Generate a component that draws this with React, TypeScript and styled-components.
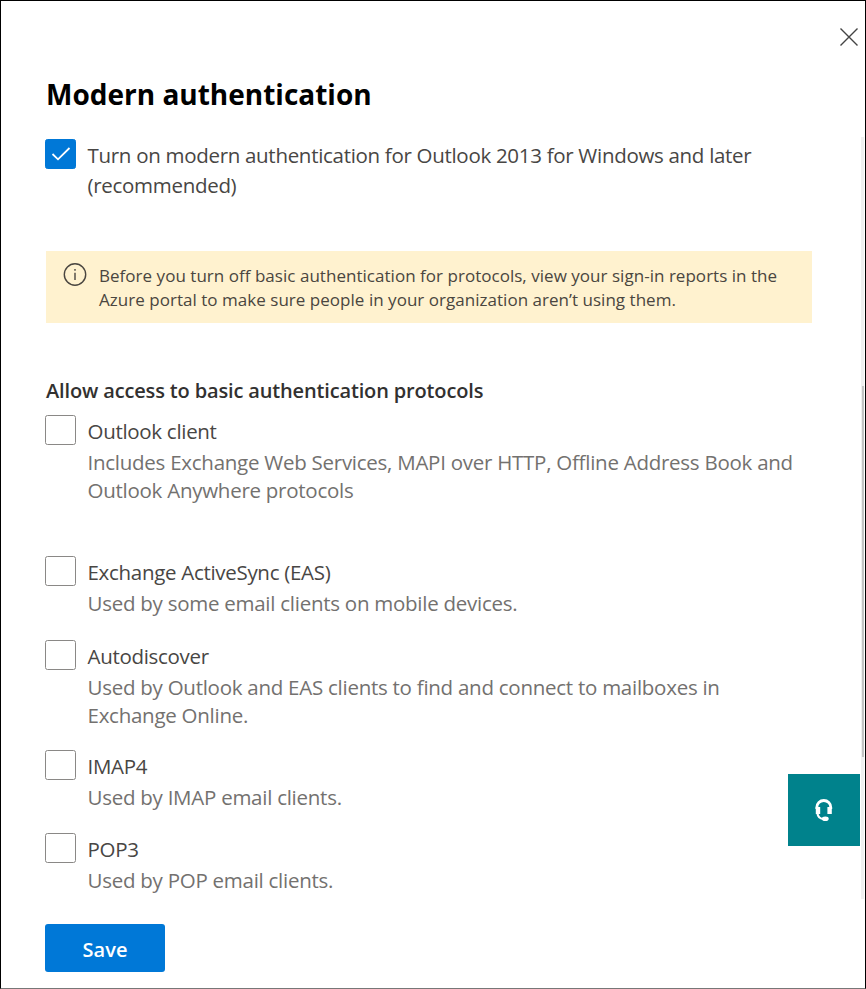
import React, { useState } from 'react';
import styled, { createGlobalStyle } from 'styled-components';

const GlobalStyle = createGlobalStyle`
  * { box-sizing: border-box; }
  body { margin: 0; background: #fff; }
  body, button {
    font-family: 'Open Sans', 'Noto Sans', sans-serif;
    font-variant-ligatures: none;
  }
`;

const Panel = styled.main`
  position: relative;
  display: flex;
  flex-direction: column;
  width: 866px;
  height: 989px;
  padding: 0 53px 0 44px;
  border: solid #000;
  border-width: 1px 1px 0 1px;
  border-bottom: 1px solid #777;
  background: #fff;
  overflow: hidden;
`;

const TopBar = styled.header`
  display: flex;
  justify-content: flex-end;
  height: 73px;
  margin-right: -47px;
  padding-top: 26px;
`;

const CloseButton = styled.button`
  display: block;
  width: 20px;
  height: 20px;
  padding: 0;
  border: 0;
  background: none;
`;

const Title = styled.h1`
  margin: 0;
  padding-left: 1px;
  height: 65px;
  font-size: 28px;
  font-weight: 700;
  line-height: 40px;
  color: #000;
`;

const Option = styled.section<{ $gap: number }>`
  display: grid;
  grid-template-columns: 30px 1fr;
  column-gap: 12.5px;
  margin-bottom: ${(p) => p.$gap}px;
`;

const CheckBox = styled.button<{ $checked: boolean }>`
  display: flex;
  align-items: center;
  justify-content: center;
  width: 31px;
  height: 30px;
  padding: 0;
  border: 1px solid ${(p) => (p.$checked ? '#0078d7' : '#8a8886')};
  border-radius: 2.5px;
  background: ${(p) => (p.$checked ? '#0078d7' : '#fff')};
`;

const OptionText = styled.div`
  padding-top: 1px;
  font-size: 20.5px;
  font-weight: 380;
  white-space: pre-line;
`;

const Label = styled.div`
  line-height: 30px;
  letter-spacing: -0.3px;
  color: #484644;
`;

const Description = styled.div`
  margin-top: 2px;
  line-height: 28px;
  letter-spacing: -0.26px;
  color: #73716f;
`;

const Notice = styled.aside`
  display: flex;
  gap: 12px;
  width: 766px;
  height: 72px;
  margin: 0 0 53px 1px;
  padding: 12px 17px;
  background: #fff2cf;
  color: #4a4640;
`;

const NoticeText = styled.p`
  margin: 0;
  padding-top: 1px;
  font-size: 17px;
  line-height: 24px;
  letter-spacing: 0.03px;
  white-space: pre-line;
`;

const SectionTitle = styled.h2`
  margin: 0;
  padding-left: 1px;
  height: 39px;
  font-size: 20px;
  font-weight: 600;
  line-height: 30px;
  letter-spacing: -0.15px;
  color: #323130;
`;

const SaveButton = styled.button`
  width: 120px;
  height: 48px;
  margin-top: 8px;
  padding: 2px 0 0;
  border: 0;
  border-radius: 3px;
  background: #0078d7;
  color: #fff;
  font-size: 20px;
  font-weight: 600;
`;

const ScrollTrack = styled.div`
  position: absolute;
  top: 136px;
  right: 1px;
  width: 3px;
  height: 762px;
  background: #f0f0f0;
`;

const ScrollThumb = styled.div`
  width: 2px;
  height: 371px;
  margin: 249px 0 0 1px;
  background: #c4c4c4;
`;

const HelpButton = styled.button`
  position: absolute;
  top: 773px;
  right: 5px;
  display: flex;
  align-items: center;
  justify-content: center;
  width: 72px;
  height: 72px;
  padding: 0;
  border: 0;
  background: #00828c;
`;

type Item = { label: string; detail?: string; gap: number };

const protocols: Item[] = [
  {
    label: 'Outlook client',
    detail:
      'Includes Exchange Web Services, MAPI over HTTP, Offline Address Book and\nOutlook Anywhere protocols',
    gap: 52,
  },
  { label: 'Exchange ActiveSync (EAS)', detail: 'Used by some email clients on mobile devices.', gap: 23 },
  {
    label: 'Autodiscover',
    detail: 'Used by Outlook and EAS clients to find and connect to mailboxes in\nExchange Online.',
    gap: 21,
  },
  { label: 'IMAP4', detail: 'Used by IMAP email clients.', gap: 22 },
  { label: 'POP3', detail: 'Used by POP email clients.', gap: 22 },
];

function CheckOption({ label, detail, gap, initial = false }: Item & { initial?: boolean }) {
  const [checked, setChecked] = useState(initial);
  return (
    <Option $gap={gap}>
      <CheckBox
        role="checkbox"
        aria-checked={checked}
        aria-label={label}
        $checked={checked}
        onClick={() => setChecked(!checked)}
      >
        {checked && (
          <svg width="20" height="16" viewBox="0 0 20 16" fill="none" stroke="#fff" strokeWidth="1.8">
            <path d="M1.5 8 L7 13.3 L18.5 2" />
          </svg>
        )}
      </CheckBox>
      <OptionText>
        <Label>{label}</Label>
        {detail && <Description>{detail}</Description>}
      </OptionText>
    </Option>
  );
}

export default function App() {
  return (
    <>
      <GlobalStyle />
      <Panel>
        <TopBar>
          <CloseButton aria-label="Close">
            <svg width="20" height="20" viewBox="0 0 20 20" fill="none" stroke="#444" strokeWidth="1.4">
              <path d="M1.5 1.5 L18.5 18.5 M18.5 1.5 L1.5 18.5" />
            </svg>
          </CloseButton>
        </TopBar>
        <Title>Modern authentication</Title>
        <CheckOption
          label={'Turn on modern authentication for Outlook 2013 for Windows and later\n(recommended)'}
          gap={51}
          initial
        />
        <Notice>
          <svg width="24" height="24" viewBox="0 0 24 24" fill="none" stroke="#4a4640" strokeWidth="1.4">
            <circle cx="12" cy="11.5" r="10.7" />
            <path d="M12 9.8 V17 M12 6 V7.8" strokeWidth="1.4" />
          </svg>
          <NoticeText>
            {'Before you turn off basic authentication for protocols, view your sign-in reports in the\nAzure portal to make sure people in your organization aren’t using them.'}
          </NoticeText>
        </Notice>
        <SectionTitle>Allow access to basic authentication protocols</SectionTitle>
        {protocols.map((item) => (
          <CheckOption key={item.label} {...item} />
        ))}
        <SaveButton>Save</SaveButton>
        <ScrollTrack>
          <ScrollThumb />
        </ScrollTrack>
        <HelpButton aria-label="Help">
          <svg width="20" height="26" viewBox="0 0 20 26" fill="none" stroke="#fff">
            <path d="M2.8 12 V10.5 A7 7 0 0 1 16.8 10.5 V12" strokeWidth="2.8" />
            <path d="M4 10 V17 M15.6 10 V17" strokeWidth="4.4" />
            <path d="M3.4 16 Q4 22 10 22" strokeWidth="2.2" />
            <ellipse cx="11.3" cy="21.8" rx="3.4" ry="2.3" fill="#fff" stroke="none" />
          </svg>
        </HelpButton>
      </Panel>
    </>
  );
}
